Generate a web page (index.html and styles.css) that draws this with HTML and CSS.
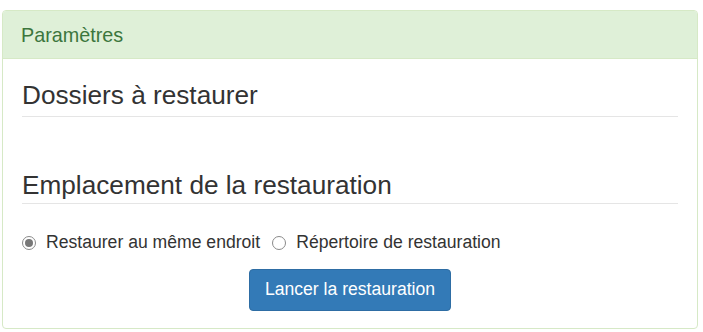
FILE: index.html
```html
<!DOCTYPE html>
<html lang="fr">
<head>
<meta charset="utf-8">
<title>Paramètres</title>
<link rel="stylesheet" href="styles.css">
</head>
<body>
<div class="panel">
  <div class="panel-heading">
    <h3 class="panel-title">Paramètres</h3>
  </div>
  <div class="panel-body">
    <h3 class="section-title section-title--first">Dossiers à restaurer</h3>
    <h3 class="section-title section-title--second">Emplacement de la restauration</h3>
    <div class="radio-row">
      <label class="radio-option">
        <input type="radio" name="loc" class="radio" checked>
        <span class="radio-label">Restaurer au même endroit</span>
      </label>
      <label class="radio-option radio-option--second">
        <input type="radio" name="loc" class="radio">
        <span class="radio-label">Répertoire de restauration</span>
      </label>
    </div>
    <div class="actions">
      <button class="btn-primary" type="button">Lancer la restauration</button>
    </div>
  </div>
</div>
</body>
</html>
```
FILE: styles.css
```css
html, body {
  margin: 0;
  background: #fff;
}
body {
  padding: 10px 5px 0 2px;
  font-family: "Liberation Sans", Arial, Helvetica, sans-serif;
  color: #333;
}
.panel {
  border: 1px solid #d6e9c6;
  border-radius: 4px;
  background: #fff;
}
.panel-heading {
  height: 47px;
  display: flex;
  align-items: center;
  padding: 0 18px;
  background: #dff0d8;
  border-bottom: 1px solid #d6e9c6;
  border-radius: 3px 3px 0 0;
}
.panel-title {
  margin: 0;
  font-size: 19.8px;
  font-weight: normal;
  color: #3c763d;
  line-height: 24px;
}
.panel-body {
  padding: 22px 19px 17px;
}
.section-title {
  margin: 0;
  font-size: 26.2px;
  font-weight: normal;
  line-height: 29px;
  color: #333;
  border-bottom: 1px solid #e5e5e5;
}
.section-title--first {
  padding-bottom: 6px;
}
.section-title--second {
  margin-top: 54px;
  padding-bottom: 3px;
}
.radio-row {
  display: flex;
  align-items: center;
  margin-top: 26px;
  height: 25px;
  font-size: 17.6px;
  line-height: 25px;
}
.radio-option {
  display: flex;
  align-items: center;
}
.radio-option--second {
  margin-left: 12px;
}
.radio {
  appearance: none;
  -webkit-appearance: none;
  box-sizing: border-box;
  flex: 0 0 14px;
  width: 14px;
  height: 14px;
  margin: 0 10px 0 0;
  border: 1px solid #8a8a8a;
  border-radius: 50%;
  background: #fff;
  position: relative;
}
.radio:checked::after {
  content: "";
  position: absolute;
  left: 2px;
  top: 2px;
  width: 8px;
  height: 8px;
  border-radius: 50%;
  background: #777;
}
.radio-label {
  color: #333;
}
.actions {
  display: flex;
  justify-content: center;
  margin-top: 14px;
}
.btn-primary {
  font-family: "Liberation Sans", Arial, Helvetica, sans-serif;
  font-size: 17.6px;
  line-height: 26px;
  padding: 6px 15px 8px;
  color: #fff;
  background: #337ab7;
  border: 1px solid #2e6da4;
  border-radius: 4px;
  cursor: pointer;
}
```
